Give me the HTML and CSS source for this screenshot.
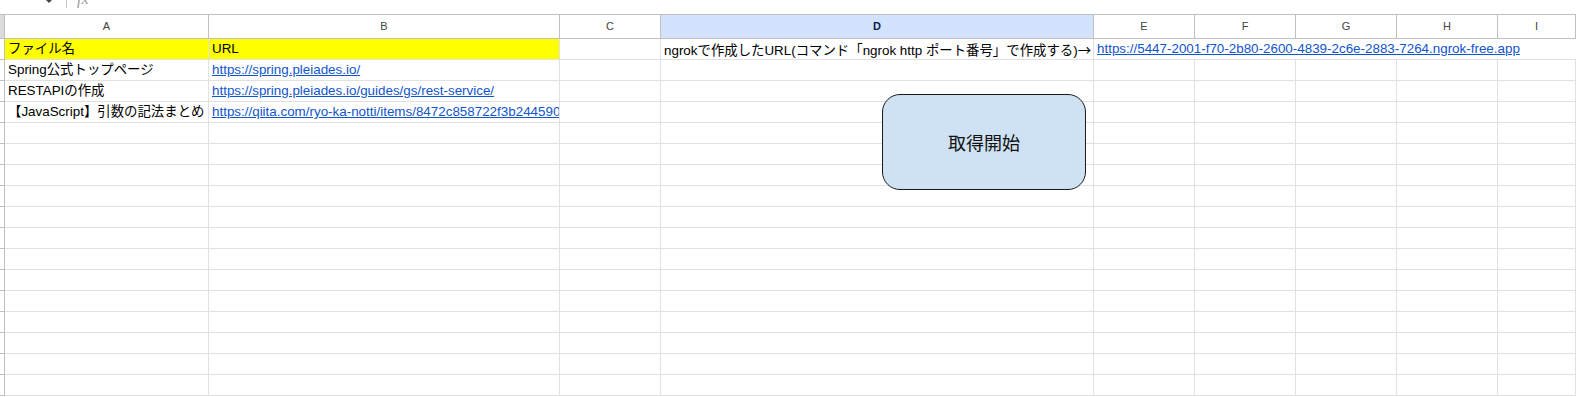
FILE: index.html
```html
<html>
  <head>
    <meta charset="utf-8">
    <link rel="stylesheet" href="styles.css">
  </head>
  <body>
    <div class="toolbar">
      <span class="caret"></span>
      <span class="sep"></span>
      <span class="fx">fx</span>
    </div>
    <div id="sheet">
      <div class="row head">
        <span class="rh corner"></span>
        <span>A</span><span>B</span><span>C</span><span class="sel">D</span>
        <span>E</span><span>F</span><span>G</span><span>H</span><span>I</span>
      </div>
      <div class="row">
        <span class="rh"></span>
        <span class="yellow">ファイル名</span>
        <span class="yellow">URL</span>
        <span></span>
        <span>ngrokで作成したURL(コマンド「ngrok http ポート番号」で作成する)<i class="arrow">→</i></span>
        <span class="wide"><a href="#">https://5447-2001-f70-2b80-2600-4839-2c6e-2883-7264.ngrok-free.app</a></span>
      </div>
      <div class="row">
        <span class="rh"></span>
        <span>Spring公式トップページ</span>
        <span><a href="#">https://spring.pleiades.io/</a></span>
        <span></span><span></span><span></span><span></span><span></span><span></span><span></span>
      </div>
      <div class="row">
        <span class="rh"></span>
        <span>RESTAPIの作成</span>
        <span><a href="#">https://spring.pleiades.io/guides/gs/rest-service/</a></span>
        <span></span><span></span><span></span><span></span><span></span><span></span><span></span>
      </div>
      <div class="row">
        <span class="rh"></span>
        <span>【JavaScript】引数の記法まとめ</span>
        <span><a href="#">https://qiita.com/ryo-ka-notti/items/8472c858722f3b244590</a></span>
        <span></span><span></span><span></span><span></span><span></span><span></span><span></span>
      </div>
      <div class="row"><span class="rh"></span><span></span><span></span><span></span><span></span><span></span><span></span><span></span><span></span><span></span></div>
      <div class="row"><span class="rh"></span><span></span><span></span><span></span><span></span><span></span><span></span><span></span><span></span><span></span></div>
      <div class="row"><span class="rh"></span><span></span><span></span><span></span><span></span><span></span><span></span><span></span><span></span><span></span></div>
      <div class="row"><span class="rh"></span><span></span><span></span><span></span><span></span><span></span><span></span><span></span><span></span><span></span></div>
      <div class="row"><span class="rh"></span><span></span><span></span><span></span><span></span><span></span><span></span><span></span><span></span><span></span></div>
      <div class="row"><span class="rh"></span><span></span><span></span><span></span><span></span><span></span><span></span><span></span><span></span><span></span></div>
      <div class="row"><span class="rh"></span><span></span><span></span><span></span><span></span><span></span><span></span><span></span><span></span><span></span></div>
      <div class="row"><span class="rh"></span><span></span><span></span><span></span><span></span><span></span><span></span><span></span><span></span><span></span></div>
      <div class="row"><span class="rh"></span><span></span><span></span><span></span><span></span><span></span><span></span><span></span><span></span><span></span></div>
      <div class="row"><span class="rh"></span><span></span><span></span><span></span><span></span><span></span><span></span><span></span><span></span><span></span></div>
      <div class="row"><span class="rh"></span><span></span><span></span><span></span><span></span><span></span><span></span><span></span><span></span><span></span></div>
      <div class="row"><span class="rh"></span><span></span><span></span><span></span><span></span><span></span><span></span><span></span><span></span><span></span></div>
      <div class="row"><span class="rh"></span><span></span><span></span><span></span><span></span><span></span><span></span><span></span><span></span><span></span></div>

      <button class="start">取得開始</button>
    </div>
  </body>
</html>
```

FILE: styles.css
```css
body {
  margin: 0;
  overflow: hidden;
  background: #fff;
  font-family: "Liberation Sans", Arial, "Noto Sans CJK JP", sans-serif;
  font-size: 13.4px;
  color: #000;
}

/* formula bar remainder ---------------------------- */
.toolbar {
  height: 14px;
  display: flex;
  align-items: flex-start;
  overflow: hidden;
}
.caret {
  margin: 0 0 0 46px;
  border-left: 3px solid transparent;
  border-right: 3px solid transparent;
  border-top: 3px solid #444;
  width: 0;
  height: 0;
}
.sep {
  margin-left: 14px;
  width: 1px;
  height: 8px;
  background: #c7c7c7;
}
.fx {
  margin: -9px 0 0 10px;
  font-family: "Liberation Serif", serif;
  font-style: italic;
  font-size: 16px;
  line-height: 16px;
  color: #9a9a9a;
}

/* grid ============================================ */
#sheet {
  position: relative;
}
.row {
  display: grid;
  grid-template-columns: 5px 204px 351px 101px 433px 101px 101px 101px 101px 1fr;
  height: 21px;
}
.row span {
  box-sizing: border-box;
  border-right: 1px solid #e1e1e1;
  border-bottom: 1px solid #e1e1e1;
  padding: 0 3px;
  line-height: 20px;
  white-space: nowrap;
  overflow: hidden;
}
.row .rh {
  padding: 0;
  border-right: 1px solid #c0c0c0;
  border-bottom: 1px solid #c0c0c0;
}
.row .wide {
  grid-column: span 5;
  border-right: none;
}
.yellow {
  background: #ffff00;
}
.arrow {
  font-style: normal;
  font-family: "Noto Sans CJK JP", sans-serif;
}
a {
  color: #1155cc;
  text-decoration: underline;
}

/* column headers =============================== */
.row.head {
  height: 25px;
}
.row.head span {
  border-top: 1px solid #c0c0c0;
  border-right: 1px solid #c0c0c0;
  border-bottom: 1px solid #c0c0c0;
  text-align: center;
  font-size: 11px;
  line-height: 23px;
  color: #444;
}
.row.head .corner {
  background: #dcdcdc;
}
.row.head .sel {
  background: #d3e3fd;
  color: #0b1e49;
  font-weight: bold;
}

/* drawing button =============================== */
.start {
  position: absolute;
  left: 882px;
  top: 80px;
  width: 204px;
  height: 96px;
  border: 1px solid #1a1a1a;
  border-radius: 18px;
  background: #cfe2f3;
  font-family: "Noto Sans CJK JP", sans-serif;
  font-size: 18px;
  color: #111;
}
```
